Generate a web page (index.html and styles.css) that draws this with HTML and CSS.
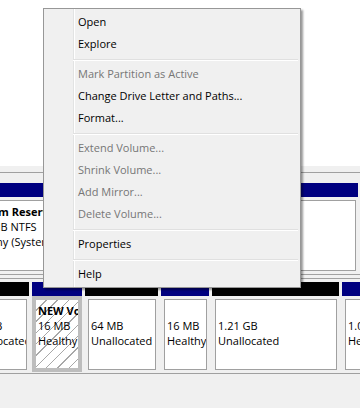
FILE: index.html
```html
<!DOCTYPE html>
<html>
<head>
<meta charset="utf-8">
<link rel="stylesheet" href="styles.css">
</head>
<body>
<div class="screen">
  <div class="top-pane"></div>
  <div class="splitter"></div>
  <div class="graph-pane">
    <div class="disk disk-first">
      <div class="part part-lead" style="width:153px">
        <div class="part-head primary"></div>
        <div class="part-body">
          <div class="part-box">
            <div class="name">System Reserved</div>
            <div>100 MB NTFS</div>
            <div>Healthy (System, Active, Primary Partition)</div>
          </div>
        </div>
      </div>
      <div class="part" style="width:239px">
        <div class="part-head primary"></div>
        <div class="part-body">
          <div class="part-box"></div>
        </div>
      </div>
    </div>
    <div class="disk disk-second">
      <div class="part part-lead2" style="width:65px">
        <div class="part-head unalloc"></div>
        <div class="part-body">
          <div class="part-box">
            <div>&nbsp;</div>
            <div>10 MB</div>
            <div>Unallocated</div>
          </div>
        </div>
      </div>
      <div class="part" style="width:50px">
        <div class="part-head primary"></div>
        <div class="part-body selected">
          <div class="part-box">
            <div class="name">NEW Volume</div>
            <div>16 MB</div>
            <div>Healthy (Primary Partition)</div>
          </div>
        </div>
      </div>
      <div class="part" style="width:73px">
        <div class="part-head unalloc"></div>
        <div class="part-body">
          <div class="part-box">
            <div>&nbsp;</div>
            <div>64 MB</div>
            <div>Unallocated</div>
          </div>
        </div>
      </div>
      <div class="part" style="width:48px">
        <div class="part-head primary"></div>
        <div class="part-body">
          <div class="part-box">
            <div>&nbsp;</div>
            <div>16 MB</div>
            <div>Healthy (Primary Partition)</div>
          </div>
        </div>
      </div>
      <div class="part" style="width:127px">
        <div class="part-head unalloc"></div>
        <div class="part-body">
          <div class="part-box">
            <div>&nbsp;</div>
            <div>1.21 GB</div>
            <div>Unallocated</div>
          </div>
        </div>
      </div>
      <div class="part" style="width:90px">
        <div class="part-head primary"></div>
        <div class="part-body">
          <div class="part-box">
            <div>&nbsp;</div>
            <div>1.00 GB</div>
            <div>Healthy (Primary Partition)</div>
          </div>
        </div>
      </div>
    </div>
  </div>

  <div class="menu">
    <div class="item">Open</div>
    <div class="item">Explore</div>
    <div class="sep"></div>
    <div class="item disabled">Mark Partition as Active</div>
    <div class="item">Change Drive Letter and Paths...</div>
    <div class="item">Format...</div>
    <div class="sep"></div>
    <div class="item disabled">Extend Volume...</div>
    <div class="item disabled">Shrink Volume...</div>
    <div class="item disabled">Add Mirror...</div>
    <div class="item disabled">Delete Volume...</div>
    <div class="sep"></div>
    <div class="item">Properties</div>
    <div class="sep"></div>
    <div class="item">Help</div>
  </div>
</div>
</body>
</html>
```
FILE: styles.css
```css
html, body {
  margin: 0;
  padding: 0;
  background: #f0f0f0;
}

.screen {
  position: relative;
  width: 360px;
  height: 408px;
  overflow: hidden;
  display: flex;
  flex-direction: column;
  font-family: "Open Sans", "Noto Sans", sans-serif;
  font-size: 11px;
  color: #000;
}

.top-pane {
  height: 166px;
  flex: none;
  background: #fff;
}

.splitter {
  height: 6px;
  flex: none;
  background: #f0f0f0;
}

.graph-pane {
  flex: 1;
  background: #f0f0f0;
  border-top: 1px solid #a0a0a0;
  padding-top: 10px;
}

.disk {
  display: flex;
  gap: 3px;
  padding-bottom: 1px;
  border-bottom: 1px solid #a0a0a0;
}

.disk-second {
  margin-top: 3px;
  border-top: 1px solid #a0a0a0;
  padding-top: 3px;
}

.part {
  flex: none;
  display: flex;
  flex-direction: column;
}

.part-lead {
  margin-left: -37px;
}

.part-lead2 {
  margin-left: -36px;
}

.part-head {
  height: 14px;
}

.part-head.primary {
  background: #000080;
}

.part-head.unalloc {
  background: #000;
}

.part-body {
  height: 76px;
  box-sizing: border-box;
  border-style: solid;
  border-width: 3px 2px 2px 3px;
  border-color: transparent;
}

.part-box {
  height: 100%;
  box-sizing: border-box;
  border: 1px solid #a0a0a0;
  background: #fff;
  padding: 3px 0 0 2px;
  line-height: 15px;
  white-space: nowrap;
  overflow: hidden;
}

.part-body.selected {
  border-width: 3px;
  border-color: #bdbdbd;
}

.part-body.selected .part-box {
  border-color: #bdbdbd;
  background: repeating-linear-gradient(-45deg, #fff 0 6px, #a8a8a8 6px 7px, #fff 7px 8px);
}

.name {
  font-weight: 700;
}

/* context menu */
.menu {
  position: absolute;
  left: 43px;
  top: 8px;
  width: 258px;
  box-sizing: border-box;
  border: 1px solid #979797;
  padding: 2px;
  background: linear-gradient(to right, #f0f0f0 29px, #e2e3e3 29px 30px, #fff 30px 31px, #f0f0f0 31px);
  box-shadow: 2px 2px 2px rgba(0, 0, 0, 0.4);
}

.item {
  height: 22px;
  line-height: 21px;
  padding-left: 32px;
  white-space: nowrap;
}

.item.disabled {
  color: #767676;
}

.sep {
  height: 8px;
  box-sizing: border-box;
  padding-top: 4px;
  margin-left: 27px;
}

.sep::before {
  content: "";
  display: block;
  height: 1px;
  background: #e0e0e0;
  border-bottom: 1px solid #fff;
}
```
